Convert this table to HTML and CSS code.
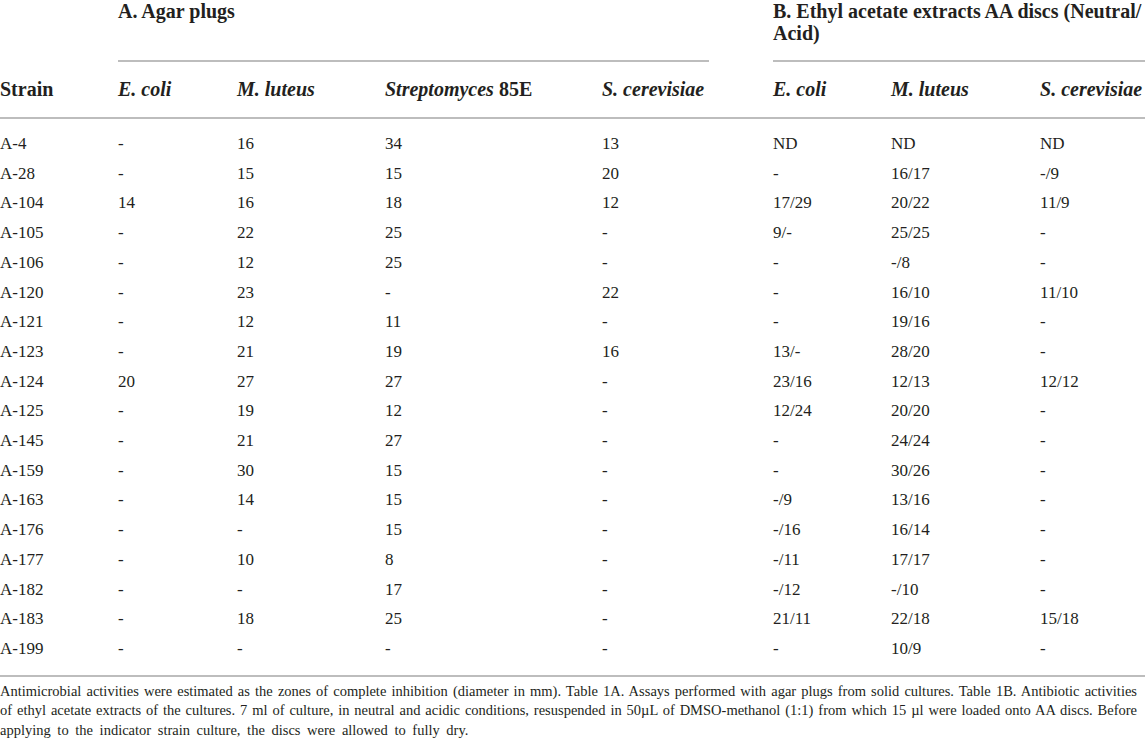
FILE: index.html
```html
<!DOCTYPE html>
<html lang="en">
<head>
<meta charset="utf-8">
<title>Table 1</title>
<link rel="stylesheet" href="styles.css">
</head>
<body>
<table class="data">
  <colgroup>
    <col class="c1"><col class="c2"><col class="c3"><col class="c4"><col class="c5"><col class="c6"><col class="c7"><col class="c8">
  </colgroup>
  <thead>
    <tr class="groups">
      <th></th>
      <th colspan="4"><div class="grp grp-a">A. Agar plugs</div></th>
      <th colspan="3"><div class="grp grp-b">B. Ethyl acetate extracts AA discs (Neutral/<br>Acid)</div></th>
    </tr>
    <tr class="heads">
      <th>Strain</th>
      <th><i>E. coli</i></th>
      <th><i>M. luteus</i></th>
      <th><i>Streptomyces</i> 85E</th>
      <th><i>S. cerevisiae</i></th>
      <th><i>E. coli</i></th>
      <th><i>M. luteus</i></th>
      <th><i>S. cerevisiae</i></th>
    </tr>
  </thead>
  <tbody>
    <tr><td>A-4</td><td>-</td><td>16</td><td>34</td><td>13</td><td>ND</td><td>ND</td><td>ND</td></tr>
    <tr><td>A-28</td><td>-</td><td>15</td><td>15</td><td>20</td><td>-</td><td>16/17</td><td>-/9</td></tr>
    <tr><td>A-104</td><td>14</td><td>16</td><td>18</td><td>12</td><td>17/29</td><td>20/22</td><td>11/9</td></tr>
    <tr><td>A-105</td><td>-</td><td>22</td><td>25</td><td>-</td><td>9/-</td><td>25/25</td><td>-</td></tr>
    <tr><td>A-106</td><td>-</td><td>12</td><td>25</td><td>-</td><td>-</td><td>-/8</td><td>-</td></tr>
    <tr><td>A-120</td><td>-</td><td>23</td><td>-</td><td>22</td><td>-</td><td>16/10</td><td>11/10</td></tr>
    <tr><td>A-121</td><td>-</td><td>12</td><td>11</td><td>-</td><td>-</td><td>19/16</td><td>-</td></tr>
    <tr><td>A-123</td><td>-</td><td>21</td><td>19</td><td>16</td><td>13/-</td><td>28/20</td><td>-</td></tr>
    <tr><td>A-124</td><td>20</td><td>27</td><td>27</td><td>-</td><td>23/16</td><td>12/13</td><td>12/12</td></tr>
    <tr><td>A-125</td><td>-</td><td>19</td><td>12</td><td>-</td><td>12/24</td><td>20/20</td><td>-</td></tr>
    <tr><td>A-145</td><td>-</td><td>21</td><td>27</td><td>-</td><td>-</td><td>24/24</td><td>-</td></tr>
    <tr><td>A-159</td><td>-</td><td>30</td><td>15</td><td>-</td><td>-</td><td>30/26</td><td>-</td></tr>
    <tr><td>A-163</td><td>-</td><td>14</td><td>15</td><td>-</td><td>-/9</td><td>13/16</td><td>-</td></tr>
    <tr><td>A-176</td><td>-</td><td>-</td><td>15</td><td>-</td><td>-/16</td><td>16/14</td><td>-</td></tr>
    <tr><td>A-177</td><td>-</td><td>10</td><td>8</td><td>-</td><td>-/11</td><td>17/17</td><td>-</td></tr>
    <tr><td>A-182</td><td>-</td><td>-</td><td>17</td><td>-</td><td>-/12</td><td>-/10</td><td>-</td></tr>
    <tr><td>A-183</td><td>-</td><td>18</td><td>25</td><td>-</td><td>21/11</td><td>22/18</td><td>15/18</td></tr>
    <tr><td>A-199</td><td>-</td><td>-</td><td>-</td><td>-</td><td>-</td><td>10/9</td><td>-</td></tr>
  </tbody>
</table>
<div class="note">
  <span class="ln full">Antimicrobial activities were estimated as the zones of complete inhibition (diameter in mm). Table 1A. Assays performed with agar plugs from solid cultures. Table 1B. Antibiotic activities</span>
  <span class="ln full">of ethyl acetate extracts of the cultures. 7 ml of culture, in neutral and acidic conditions, resuspended in 50µL of DMSO-methanol (1:1) from which 15 µl were loaded onto AA discs. Before</span>
  <span class="ln last">applying to the indicator strain culture, the discs were allowed to fully dry.</span>
</div>
</body>
</html>
```

FILE: styles.css
```css
html, body {
  margin: 0;
  padding: 0;
  background: #ffffff;
}

body {
  font-family: "Liberation Serif", "Times New Roman", serif;
  color: #231f20;
  width: 1145px;
}

.data {
  width: 1145px;
  border-collapse: collapse;
  table-layout: fixed;
}

.c1 { width: 118px; }
.c2 { width: 119px; }
.c3 { width: 148px; }
.c4 { width: 217px; }
.c5 { width: 171px; }
.c6 { width: 118px; }
.c7 { width: 149px; }
.c8 { width: 105px; }

th, td {
  padding: 0;
  text-align: left;
  font-weight: normal;
}

.groups th {
  vertical-align: top;
}

.grp {
  box-sizing: border-box;
  height: 62px;
  padding-top: 0;
  font-weight: bold;
  font-size: 20px;
  line-height: 22px;
  white-space: nowrap;
  border-bottom: 2px solid #bdbdbd;
}

.grp-a {
  margin-right: 64px;
}

.heads th {
  height: 55px;
  font-weight: bold;
  font-size: 20px;
  vertical-align: middle;
  white-space: nowrap;
  border-bottom: 2px solid #bdbdbd;
}

.heads th i {
  font-style: italic;
}

tbody td {
  font-size: 17px;
  line-height: 29.7px;
  height: 29.7px;
  vertical-align: middle;
}

tbody tr:first-child td {
  padding-top: 10px;
}

tbody tr:last-child td {
  padding-bottom: 11px;
  border-bottom: 2px solid #bdbdbd;
}

.note {
  width: 1137px;
  padding-top: 5px;
  font-size: 14.5px;
  line-height: 19.5px;
}

.ln {
  display: block;
  white-space: nowrap;
}

.ln.full {
  text-align: justify;
  text-align-last: justify;
}

.ln.last {
  word-spacing: 3px;
}
```
